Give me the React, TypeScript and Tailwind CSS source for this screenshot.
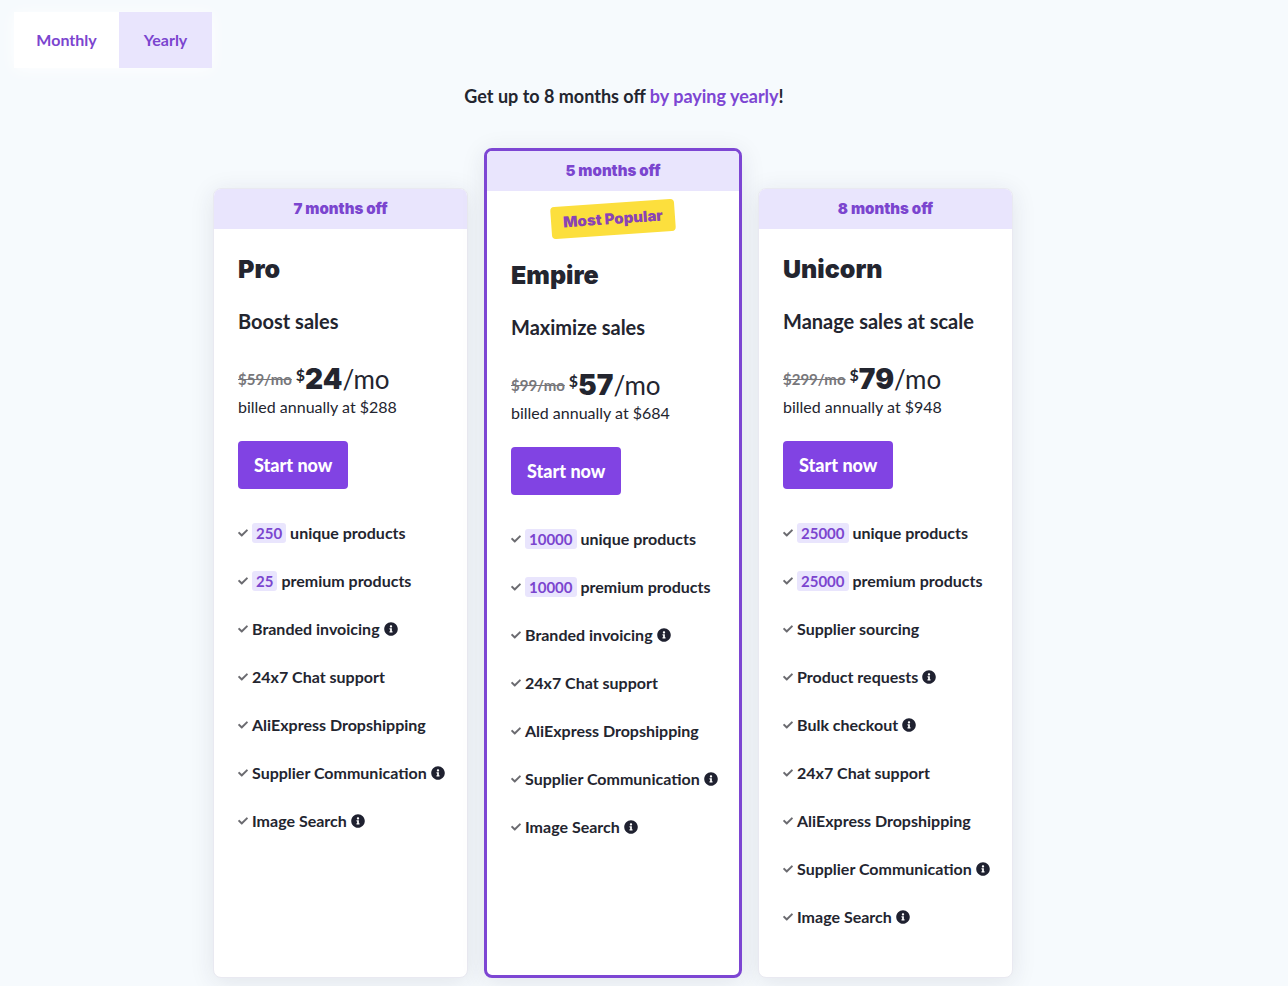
import { useState } from "react";
import { FaCheck, FaInfoCircle } from "react-icons/fa";

type Feature = { label: string; count?: string; info?: boolean };

type Plan = {
  name: string;
  tagline: string;
  discount: string;
  oldPrice: string;
  price: string;
  billed: string;
  popular?: boolean;
  features: Feature[];
};

const sharedFeatures: Feature[] = [
  { label: "24x7 Chat support" },
  { label: "AliExpress Dropshipping" },
  { label: "Supplier Communication", info: true },
  { label: "Image Search", info: true },
];

const plans: Plan[] = [
  {
    name: "Pro",
    tagline: "Boost sales",
    discount: "7 months off",
    oldPrice: "$59/mo",
    price: "24",
    billed: "$288",
    features: [
      { count: "250", label: "unique products" },
      { count: "25", label: "premium products" },
      { label: "Branded invoicing", info: true },
      ...sharedFeatures,
    ],
  },
  {
    name: "Empire",
    tagline: "Maximize sales",
    discount: "5 months off",
    oldPrice: "$99/mo",
    price: "57",
    billed: "$684",
    popular: true,
    features: [
      { count: "10000", label: "unique products" },
      { count: "10000", label: "premium products" },
      { label: "Branded invoicing", info: true },
      ...sharedFeatures,
    ],
  },
  {
    name: "Unicorn",
    tagline: "Manage sales at scale",
    discount: "8 months off",
    oldPrice: "$299/mo",
    price: "79",
    billed: "$948",
    features: [
      { count: "25000", label: "unique products" },
      { count: "25000", label: "premium products" },
      { label: "Supplier sourcing" },
      { label: "Product requests", info: true },
      { label: "Bulk checkout", info: true },
      ...sharedFeatures,
    ],
  },
];

function FeatureRow({ feature }: { feature: Feature }) {
  return (
    <li className="flex h-12 items-center text-base font-bold whitespace-nowrap">
      <FaCheck className="mr-1 size-2.5 shrink-0 text-[#6b6b70]" />
      {feature.count && (
        <span className="mr-1 rounded-[3px] bg-[#e9e5fd] px-1 text-[15px] leading-5 text-[#7b45cf]">
          {feature.count}
        </span>
      )}
      <span>{feature.label}</span>
      {feature.info && <FaInfoCircle className="ml-1 size-3.5 shrink-0 text-[#1f2130]" />}
    </li>
  );
}

function PlanCard({ plan }: { plan: Plan }) {
  return (
    <section
      className={
        plan.popular
          ? "flex flex-col overflow-hidden rounded-lg border-3 border-[#7d46d3] bg-white shadow-[0_4px_24px_rgba(40,40,70,0.10)]"
          : "mt-10 flex flex-col overflow-hidden rounded-lg border border-[#e9e9f1] bg-white shadow-[0_4px_24px_rgba(40,40,70,0.10)]"
      }
    >
      <p className="bg-[#e9e5fd] text-center font-['Inter',sans-serif] text-[15px] leading-10 font-black text-[#7b45cf]">
        {plan.discount}
      </p>
      <div className="flex flex-col items-start px-6 pb-9">
        {plan.popular && (
          <span className="mt-3 -rotate-4 self-center rounded bg-[#fcdf3d] px-3 font-['Inter',sans-serif] text-[15px] leading-8 font-black text-[#8a43b5]">
            Most Popular
          </span>
        )}
        <h2 className="mt-6 font-['Inter',sans-serif] text-[25px] leading-8 font-black">
          {plan.name}
        </h2>
        <p className="mt-6 text-xl leading-6 font-bold">{plan.tagline}</p>
        <p className="mt-6 flex h-10 items-center pt-1 leading-10">
          <s className="mr-1 text-[15px] font-bold text-[#77777b]">{plan.oldPrice}</s>
          <span className="flex items-baseline">
            <sup className="text-base leading-none font-bold">$</sup>
            <span className="font-['Inter',sans-serif] text-[28px] font-black">{plan.price}</span>
            <span className="text-[26px]">/mo</span>
          </span>
        </p>
        <p className="text-base leading-5">billed annually at {plan.billed}</p>
        <button
          type="button"
          className="mt-6 h-12 rounded bg-[#8143e3] px-4 text-lg font-black whitespace-nowrap text-white"
        >
          Start now
        </button>
        <ul className="mt-5">
          {plan.features.map((feature) => (
            <FeatureRow key={feature.label} feature={feature} />
          ))}
        </ul>
      </div>
    </section>
  );
}

export default function App() {
  const [period, setPeriod] = useState("yearly");
  return (
    <main className="min-h-screen bg-[#f6fafd] pt-3 pb-2 font-['Lato',sans-serif] text-[#23252f]">
      <div className="ml-3.5 inline-flex h-14 bg-white text-base font-bold text-[#7b45cf] shadow-[0_2px_16px_rgba(255,255,255,0.9)]">
        <button
          type="button"
          aria-pressed={period === "monthly"}
          onClick={() => setPeriod("monthly")}
          className="w-[105px] aria-pressed:bg-[#e9e5fd]"
        >
          Monthly
        </button>
        <button
          type="button"
          aria-pressed={period === "yearly"}
          onClick={() => setPeriod("yearly")}
          className="w-[93px] aria-pressed:bg-[#e9e5fd]"
        >
          Yearly
        </button>
      </div>
      <h1 className="mt-4 pr-10 text-center text-lg leading-6 font-bold">
        Get up to 8 months off <span className="text-[#7d46d3]">by paying yearly</span>!
      </h1>
      <div className="mt-10 pr-[62px]">
        <div className="mx-auto grid max-w-[800px] grid-cols-[255fr_258fr_255fr] gap-4">
          {plans.map((plan) => (
            <PlanCard key={plan.name} plan={plan} />
          ))}
        </div>
      </div>
    </main>
  );
}
